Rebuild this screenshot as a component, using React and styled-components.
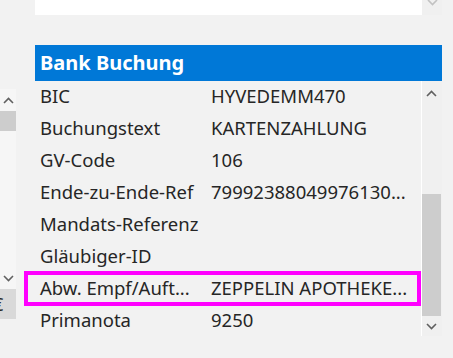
import React from 'react';
import styled, { createGlobalStyle } from 'styled-components';

const GlobalStyle = createGlobalStyle`
  html, body {
    margin: 0;
    padding: 0;
    background: #f2f2f2;
  }
`;

const rows = [
  { label: 'BIC', value: 'HYVEDEMM470' },
  { label: 'Buchungstext', value: 'KARTENZAHLUNG' },
  { label: 'GV-Code', value: '106' },
  { label: 'Ende-zu-Ende-Ref', value: '79992388049976130...' },
  { label: 'Mandats-Referenz', value: '' },
  { label: 'Gläubiger-ID', value: '' },
  { label: 'Abw. Empf/Auft...', value: 'ZEPPELIN APOTHEKE...' },
  { label: 'Primanota', value: '9250' },
];

const Chevron = ({ up, color = '#606060' }) => (
  <svg width="11" height="7" viewBox="0 0 11 7">
    <path
      d={up ? 'M1 6 L5.5 1.5 L10 6' : 'M1 1 L5.5 5.5 L10 1'}
      fill="none"
      stroke={color}
      strokeWidth="1.6"
    />
  </svg>
);

const App = () => {
  return (
    <Page>
      <GlobalStyle />
      <LeftStrip>
        <LeftScroll>
          <ArrowBox>
            <Chevron up />
          </ArrowBox>
          <Thumb $h={20} />
          <Spacer />
          <ArrowBox>
            <Chevron />
          </ArrowBox>
        </LeftScroll>
        <CutCell>
          <span>€</span>
        </CutCell>
      </LeftStrip>

      <Panel>
        <TopBox>
          <WhiteArea />
          <TopScroll>
            <Chevron color="#c2c2c2" />
          </TopScroll>
        </TopBox>

        <Header>Bank Buchung</Header>

        <ListArea>
          <Rows>
            {rows.map((r) => (
              <Row key={r.label}>
                <Label>{r.label}</Label>
                <Value>{r.value}</Value>
              </Row>
            ))}
          </Rows>
          <ListScroll>
            <ArrowBox $h={24}>
              <Chevron up />
            </ArrowBox>
            <Spacer />
            <Thumb $h={122} $w={19} />
            <ArrowBox $h={20}>
              <Chevron />
            </ArrowBox>
          </ListScroll>
          <Highlight />
        </ListArea>
      </Panel>
    </Page>
  );
};

export default App;

const Page = styled.div`
  display: flex;
  width: 453px;
  height: 358px;
  overflow: hidden;
  background: #f2f2f2;
  font-family: 'Noto Sans', 'Liberation Sans', sans-serif;
  color: #262626;
`;

const LeftStrip = styled.div`
  width: 16px;
  margin-right: 19px;
  padding-top: 89px;
  display: flex;
  flex-direction: column;
  overflow: hidden;
`;

const LeftScroll = styled.div`
  height: 200px;
  background: #f6f6f6;
  display: flex;
  flex-direction: column;
`;

const ArrowBox = styled.div`
  height: ${(p) => p.$h || 22}px;
  display: flex;
  align-items: center;
  justify-content: center;
  flex-shrink: 0;
`;

const Thumb = styled.div`
  height: ${(p) => p.$h}px;
  width: ${(p) => (p.$w ? `${p.$w}px` : '100%')};
  background: #cdcdcd;
  flex-shrink: 0;
`;

const Spacer = styled.div`
  flex: 1;
`;

const CutCell = styled.div`
  height: 30px;
  background: #d9d9d9;
  display: flex;
  align-items: center;
  overflow: hidden;
  font-size: 18px;

  span {
    margin-left: -7px;
  }
`;

const Panel = styled.div`
  width: 407px;
  display: flex;
  flex-direction: column;
`;

const TopBox = styled.div`
  height: 15px;
  display: flex;
  margin-bottom: 30px;
`;

const WhiteArea = styled.div`
  flex: 1;
  background: #ffffff;
`;

const TopScroll = styled.div`
  width: 20px;
  background: #f0f0f0;
  display: flex;
  justify-content: center;
  align-items: flex-start;
  overflow: hidden;

  svg {
    margin-top: -1px;
  }
`;

const Header = styled.div`
  height: 36px;
  box-sizing: border-box;
  padding-bottom: 2px;
  background: #0078d7;
  color: #ffffff;
  font-weight: 700;
  font-size: 20px;
  display: flex;
  align-items: center;
  padding-left: 5px;
`;

const ListArea = styled.div`
  position: relative;
  display: flex;
  height: 255px;
`;

const Rows = styled.div`
  width: 386px;
  border-right: 1px solid #ffffff;
  overflow: hidden;
`;

const Row = styled.div`
  height: 32px;
  box-sizing: border-box;
  padding-bottom: 3px;
  display: grid;
  grid-template-columns: 176px 1fr;
  align-items: center;
  font-size: 18.5px;
  white-space: nowrap;
`;

const Label = styled.div`
  padding-left: 5px;
  overflow: hidden;
`;

const Value = styled.div`
  overflow: hidden;
`;

const ListScroll = styled.div`
  width: 20px;
  background: #f0f0f0;
  display: flex;
  flex-direction: column;
  align-items: flex-start;

  & > div:not(${Thumb}) {
    width: 19px;
  }
`;

const Highlight = styled.div`
  position: absolute;
  left: -11px;
  top: 190px;
  width: 397px;
  height: 35px;
  box-sizing: border-box;
  border: 4px solid #ff00ff;
  pointer-events: none;
`;
